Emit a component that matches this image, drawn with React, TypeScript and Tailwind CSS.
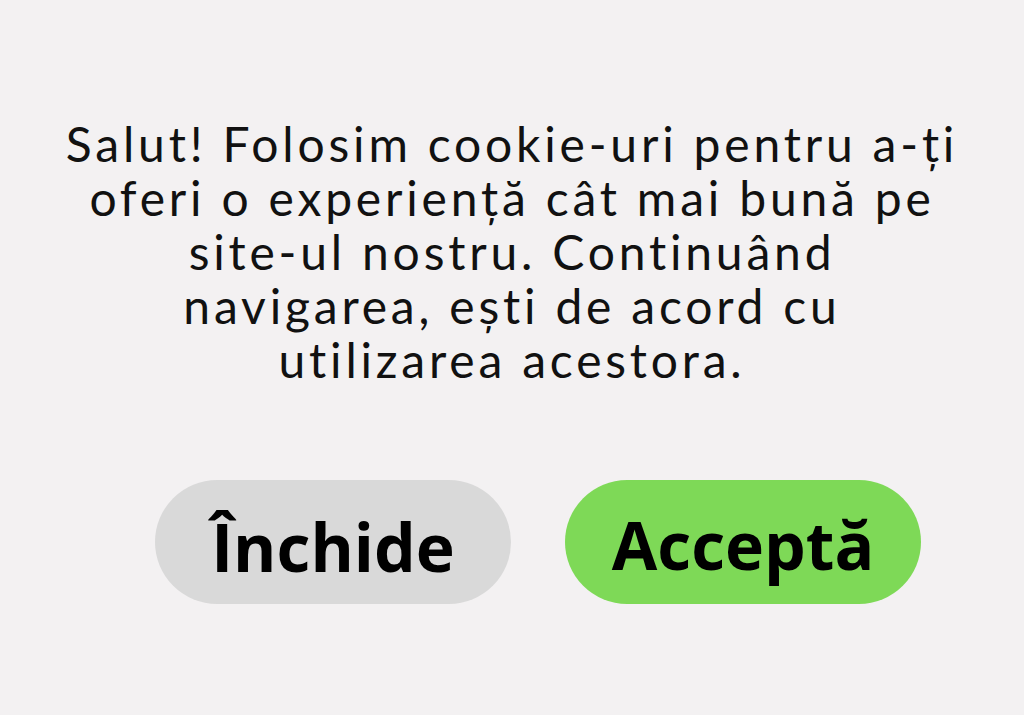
export default function App() {
  return (
    <div className="w-[1024px] h-[715px] bg-[#f3f1f2] flex flex-col items-center overflow-hidden">
      <p className="mt-[117px] w-[1000px] text-center text-[48px] leading-[54px] text-[#111] tracking-[3.8px] font-['Lato','Noto_Sans',sans-serif]">
        Salut! Folosim cookie-uri pentru a-ți
        <br />
        oferi o experiență cât mai bună pe
        <br />
        site-ul nostru. Continuând
        <br />
        navigarea, ești de acord cu
        <br />
        utilizarea acestora.
      </p>
      <div className="mt-[93px] flex gap-[54px] pl-[52px]">
        <button className="w-[356px] h-[124px] pt-[8px] rounded-full bg-[#d9d9d9] text-black font-bold text-[66px] flex items-center justify-center font-['Open_Sans','Noto_Sans',sans-serif]">
          Închide
        </button>
        <button className="w-[356px] h-[124px] pt-[4px] rounded-full bg-[#7ed957] text-black font-bold text-[66px] flex items-center justify-center font-['Open_Sans','Noto_Sans',sans-serif]">
          Acceptă
        </button>
      </div>
    </div>
  );
}
